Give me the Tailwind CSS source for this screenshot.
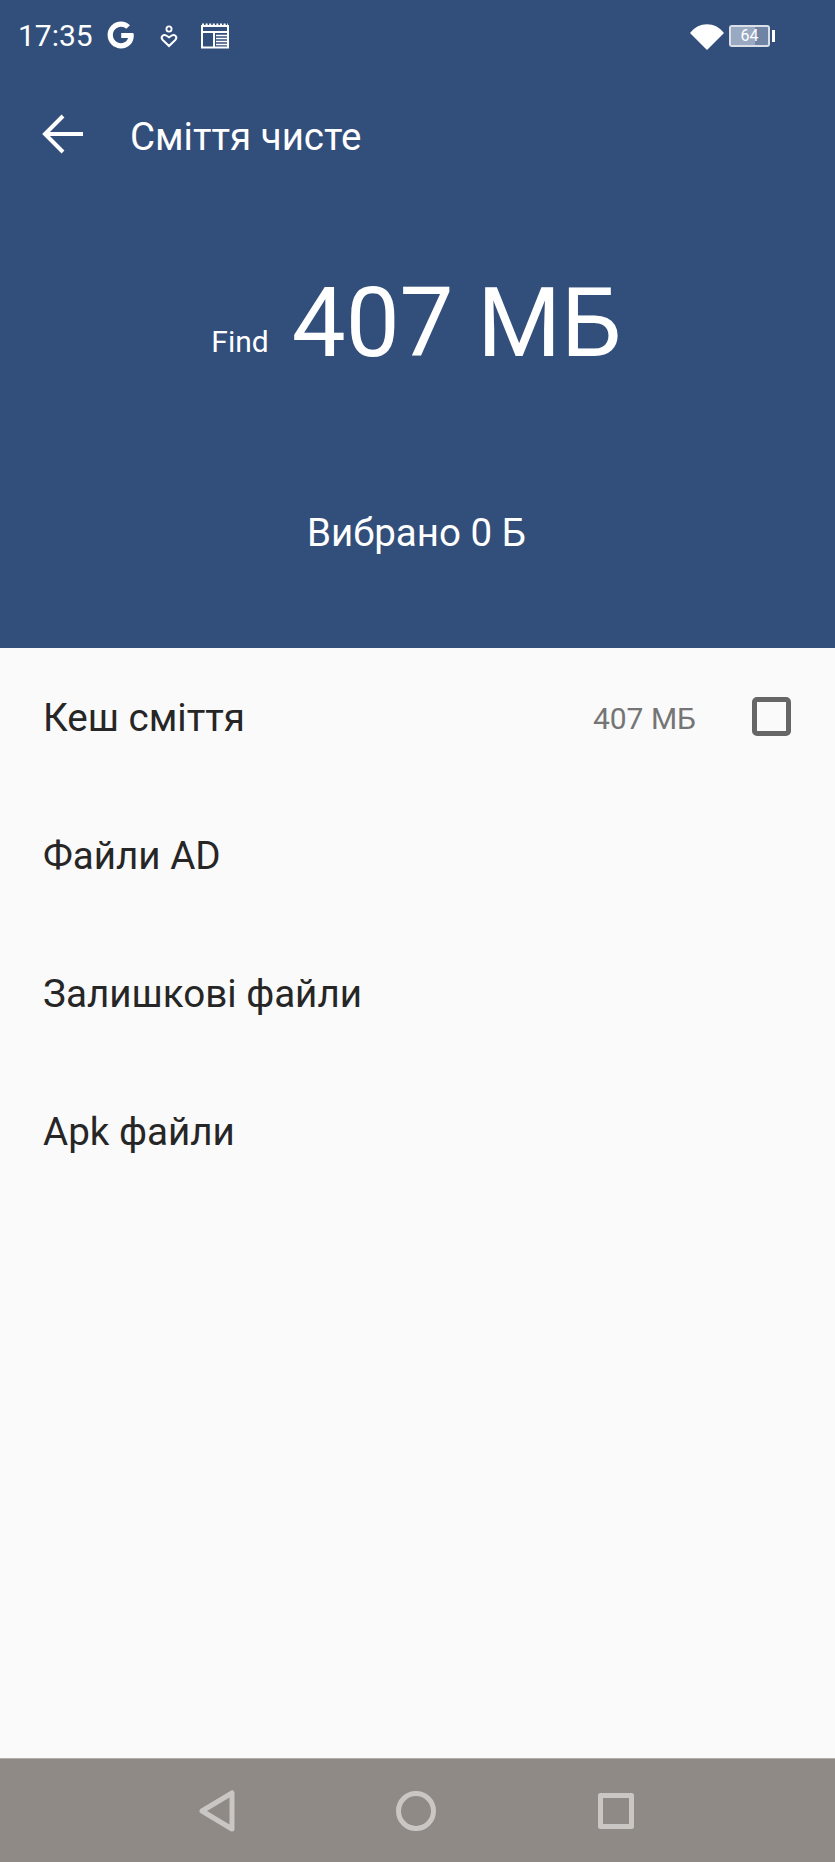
<!DOCTYPE html>
<html>
<head>
<meta charset="utf-8">
<script src="https://cdn.jsdelivr.net/npm/@tailwindcss/browser@4"></script>
</head>
<body class="m-0">
<div class="w-[835px] h-[1862px] flex flex-col bg-[#fafafa] overflow-hidden font-['Roboto',sans-serif]">
  <header class="h-[648px] shrink-0 bg-[#324e7b] text-white flex flex-col">
    <div class="h-[72px] flex items-center pl-[18px] pr-[60px]">
      <span class="text-[30px] leading-none w-[87px]">17:35</span>
      <svg class="w-[32px] h-[32px] -mt-[3px]" viewBox="0 0 30 30"><path d="M26.5 13.2H15.2v4.6h6.4c-.8 3-3.3 4.9-6.6 4.9-4.2 0-7.6-3.4-7.6-7.7s3.4-7.7 7.6-7.7c2 0 3.7.7 5 1.9l3.4-3.4C21.4 3.8 18.4 2.4 15 2.4 8.1 2.400 2.400 8.100 2.400 15S8.100 27.600 15 27.600c7 0 12-4.900 12-12.100 0-.8-.2-1.600-.5-2.300z" fill="#fff"/></svg>
      <svg class="w-[20px] h-[28px] ml-[22px]" viewBox="0 0 20 28" fill="none" stroke="#fff"><circle cx="10" cy="7" r="2.600" stroke-width="1.800"/><path d="M10 24l-6.500-6.300c-2.300-2.600.9-6 3.700-4.200L10 15.300l2.800-1.800c2.800-1.800 6 1.600 3.700 4.200z" stroke-width="2"/></svg>
      <svg class="w-[28px] h-[26px] ml-[22px]" viewBox="0 0 28 26" fill="none" stroke="#fff"><path d="M1 3v21.500h26V3z" stroke-width="2"/><path d="M1 2h26" stroke-width="3" stroke-dasharray="2 1.600"/><path d="M1 9h26" stroke-width="2"/><path d="M13 9v15" stroke-width="2"/><path d="M15 12.500h11M15 15.500h11M15 18.500h11M15 21.500h11" stroke-width="1.400"/></svg>
      <div class="ml-auto flex items-center">
        <svg class="w-[34px] h-[28px]" viewBox="0 0 34 28"><path d="M1 11C5 6 11 3 17 3s12 3 16 8L17 27z" fill="#fff" stroke="#fff" stroke-width="1.500" stroke-linejoin="round"/></svg>
        <div class="ml-[5px] relative w-[41px] h-[22px] rounded-[3px] border-2 border-white/75 bg-[#6f83a5] overflow-hidden flex items-center justify-center">
          <div class="absolute left-0 top-0 bottom-0 w-[64%] bg-[#9aa9c2]"></div>
          <span class="relative text-[16px] leading-none text-white">64</span>
        </div>
        <div class="w-[3px] h-[12px] bg-white ml-[2px]"></div>
      </div>
    </div>
    <div class="h-[84px] mt-[23px] flex items-center pl-[42px]">
      <svg class="w-[41px] h-[40px] -mt-[6px]" viewBox="0 0 41 40" fill="none" stroke="#fff" stroke-width="4"><path d="M41 20H3M21 2L3 20l18 18"/></svg>
      <span class="ml-[47px] text-[38.5px] leading-none">Сміття чисте</span>
    </div>
    <div class="flex items-baseline justify-center mt-[89px] h-[110px] pr-[2px]">
      <span class="text-[30px] mr-[23px] -translate-y-[4px]">Find</span>
      <span class="text-[96px] leading-[110px]">407 МБ</span>
    </div>
    <div class="text-center text-[38.5px] leading-none mt-[136px] pr-[2px]">Вибрано 0 Б</div>
  </header>
  <main class="flex-1 flex flex-col text-[#262626] text-[38.6px]">
    <div class="h-[138px] flex items-center pl-[43px] pr-[44px] pt-[2px]">
      <span>Кеш сміття</span>
      <span class="ml-auto text-[30px] text-[#757575]">407 МБ</span>
      <div class="ml-[56px] w-[39px] h-[39px] rounded-[5px] border-[5px] border-[#666666] -mt-[4px]"></div>
    </div>
    <div class="h-[138px] flex items-center pl-[43px] pt-[2px]">Файли AD</div>
    <div class="h-[138px] flex items-center pl-[43px] pt-[2px]">Залишкові файли</div>
    <div class="h-[138px] flex items-center pl-[43px] pt-[2px]">Apk файли</div>
  </main>
  <nav class="h-[104px] shrink-0 bg-[#8f8a86] border-t border-[#b0aca9] flex items-center">
    <svg class="w-[36px] h-[42px] ml-[199px]" viewBox="0 0 36 42" fill="none" stroke="#c9c6c4" stroke-width="5" stroke-linejoin="round"><path d="M33 3v36L3 21z"/></svg>
    <svg class="w-[40px] h-[40px] ml-[161px]" viewBox="0 0 40 40" fill="none" stroke="#c9c6c4" stroke-width="5"><circle cx="20" cy="20" r="17.500"/></svg>
    <svg class="w-[36px] h-[36px] ml-[162px]" viewBox="0 0 36 36" fill="none" stroke="#c9c6c4" stroke-width="5" stroke-linejoin="round"><rect x="2.500" y="2.500" width="31" height="31"/></svg>
  </nav>
</div>
</body>
</html>
